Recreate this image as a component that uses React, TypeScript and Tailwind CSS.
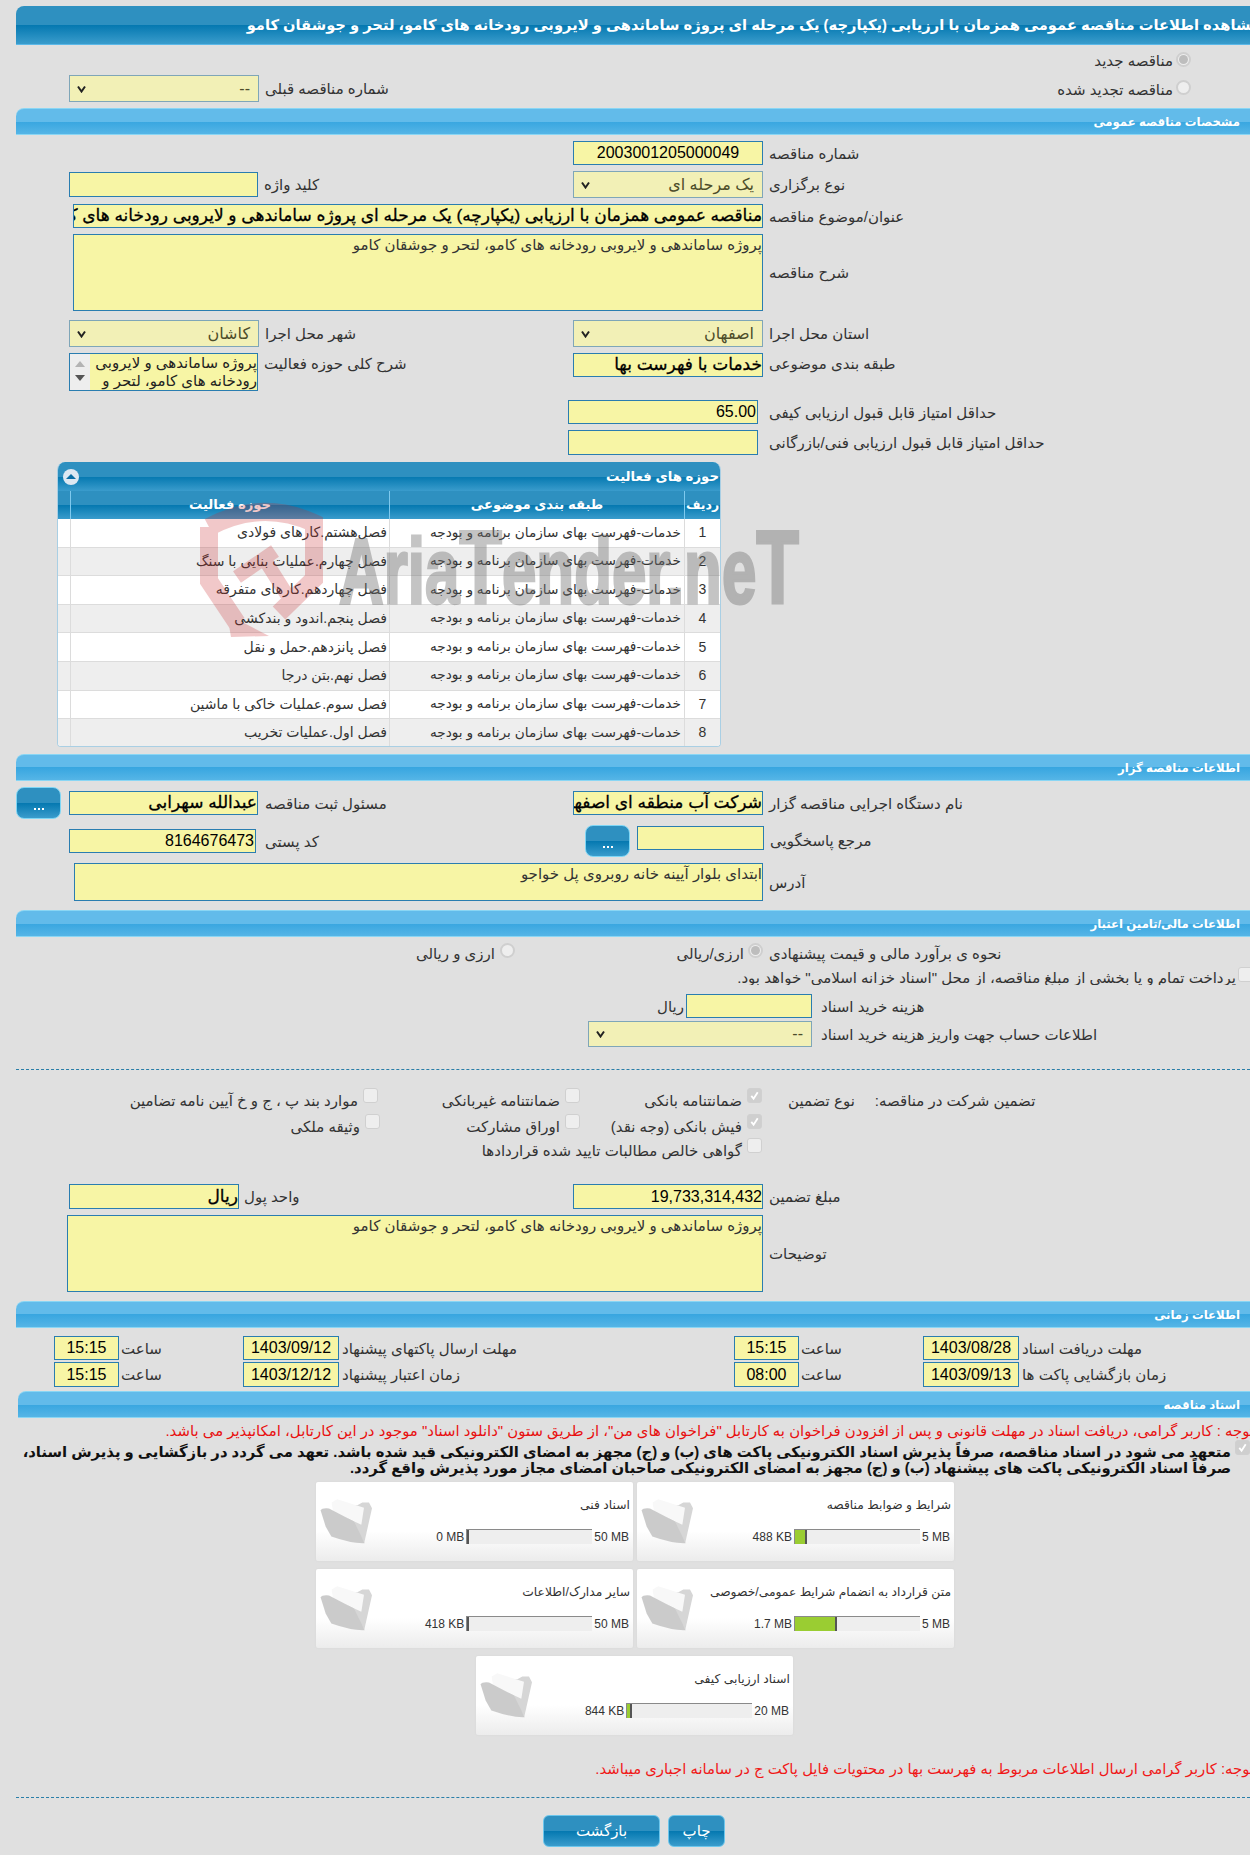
import type { ReactNode } from 'react';

const activities = [
  'فصل‌هشتم.کارهای فولادی',
  'فصل چهارم.عملیات بنایی با سنگ',
  'فصل چهاردهم.کارهای متفرقه',
  'فصل پنجم.اندود و بندکشی',
  'فصل پانزدهم.حمل و نقل',
  'فصل نهم.بتن درجا',
  'فصل سوم.عملیات خاکی با ماشین',
  'فصل اول.عملیات تخریب',
];

const desc = 'پروژه ساماندهی و لایروبی رودخانه های کامو، لتحر و جوشقان کامو';

function Bar({ title, className = '' }: { title: string; className?: string }) {
  return (
    <div
      dir="rtl"
      className={`flex h-[27px] items-center rounded-tr-none rounded-tl-[8px] border-t border-b border-[#8ad6f4] bg-[linear-gradient(180deg,#62bbea_0%,#62bbea_50%,#38a6e0_50%,#55b5e6_100%)] pr-[10px] text-[11.7px] font-bold text-white ${className}`}
    >
      {title}
    </div>
  );
}

function Label({ children, className = '' }: { children: ReactNode; className?: string }) {
  return (
    <span dir="rtl" className={`whitespace-nowrap text-[15px] leading-none text-[#333] ${className}`}>
      {children}
    </span>
  );
}

function Inp({ value = '', className = '' }: { value?: string; className?: string }) {
  return (
    <input
      readOnly
      dir="rtl"
      value={value}
      className={`block shrink-0 border border-[#2a7db0] bg-[#f7f5a5] px-0 text-black outline-none ${className}`}
    />
  );
}

function Sel({ value, className = '' }: { value: string; className?: string }) {
  return (
    <div
      className={`flex shrink-0 items-center justify-between border border-[#7fa6b8] bg-[#f2f0b6] pl-[6px] pr-[8px] text-[16px] text-[#4d4d2a] ${className}`}
    >
      <svg viewBox="0 0 10 8" className="h-[8px] w-[11px]" fill="none" stroke="#222" strokeWidth="2">
        <path d="M1.5 1.5L5 6.5L8.5 1.5" />
      </svg>
      <span dir="rtl">{value}</span>
    </div>
  );
}

function Area({ value, className = '' }: { value: string; className?: string }) {
  return (
    <textarea
      readOnly
      dir="rtl"
      value={value}
      className={`block shrink-0 resize-none overflow-hidden border border-[#2a7db0] bg-[#f7f5a5] px-0 text-[15px] leading-[20px] text-[#333] outline-none ${className}`}
    />
  );
}

function Radio({ on = false }: { on?: boolean }) {
  return (
    <span className="flex h-[15px] w-[15px] shrink-0 items-center justify-center rounded-full border-2 border-[#cfcfcf] bg-[#eeeeee]">
      {on && <span className="h-[9px] w-[9px] rounded-full bg-[#bdbdbd]" />}
    </span>
  );
}

function Check({ on = false }: { on?: boolean }) {
  return (
    <span
      className={`flex h-[15px] w-[15px] shrink-0 items-center justify-center rounded-[3px] border border-[#d0d0d0] ${on ? 'bg-[#cfcfcf]' : 'bg-[#eeeeee]'}`}
    >
      {on && (
        <svg viewBox="0 0 12 12" className="h-[11px] w-[11px]" fill="none" stroke="#fff" strokeWidth="2">
          <path d="M2.5 6.5L5 9.5L9.5 2.5" />
        </svg>
      )}
    </span>
  );
}

function DotsButton({ className = '' }: { className?: string }) {
  return (
    <div
      className={`flex h-[32px] w-[45px] shrink-0 items-end justify-center rounded-[8px] border border-[#7ed6f5] bg-[linear-gradient(180deg,#2e90c0_0%,#2e90c0_50%,#0478b0_50%,#3a9ccc_100%)] pb-[8px] ${className}`}
    >
      <span className="flex gap-[2px]">
        <span className="h-[2px] w-[2px] bg-white" />
        <span className="h-[2px] w-[2px] bg-white" />
        <span className="h-[2px] w-[2px] bg-white" />
      </span>
    </div>
  );
}

function Folder() {
  return (
    <svg viewBox="30 55 165 140" className="mt-[16px] ml-[3px] h-[47px] w-[55px] shrink-0">
      <path d="M70 72L145 76L160 68L180 68L189 85L166 188L120 120Z" fill="#d6d6d6" />
      <path d="M68 68L85 58L165 84L157 135L72 95Z" fill="#f8f8f8" />
      <path d="M35 92Q38 84 60 86L135 125L167 190Q130 192 67 170L50 140Z" fill="#cbcbcb" />
    </svg>
  );
}

function Card({ title, used, max, pct }: { title: string; used: string; max: string; pct: number }) {
  return (
    <div className="flex h-[79px] w-[317px] shrink-0 rounded-[2px] bg-[linear-gradient(180deg,#ffffff_0%,#ffffff_62%,#ececec_100%)] shadow-[0_0_2px_#d4d4d4]">
      <Folder />
      <div className="min-w-0 flex-1 pr-[3px]">
        <div dir="rtl" className="mt-[15px] h-[16px] whitespace-nowrap text-[12.3px] leading-[16px] text-[#333]">
          {title}
        </div>
        <div className="mt-[16px] flex items-center justify-end gap-[2px] pr-[1px] text-[12px] leading-none text-[#333]">
          <span>{used}</span>
          <div className="flex h-[15px] w-[126px] shrink-0 border-t border-l border-[#8a8a8a] bg-[#eeeeee]">
            <div className="h-full border-r-2 border-[#555] bg-[#9acd32]" style={{ width: `${pct}%` }} />
          </div>
          <span>{max}</span>
        </div>
      </div>
    </div>
  );
}

function GuaranteeCell({ label, on, className = '' }: { label: string; on?: boolean; className?: string }) {
  return (
    <div className={`flex shrink-0 justify-end gap-[5px] ${className}`}>
      <Label className="pt-[5px]">{label}</Label>
      <Check on={on} />
    </div>
  );
}

function Watermark() {
  return (
    <svg className="pointer-events-none absolute top-[495px] left-[195px] h-[150px] w-[610px]" viewBox="0 0 610 150" fill="none">
      <g opacity="0.25">
        <path d="M14 32Q66 4 119 28V84L84 118M14 32V86L42 128" stroke="#c8292b" strokeWidth="18" />
        <path d="M32 119L74 141L36 142Z" fill="#c8292b" />
        <path d="M42 82L80 56M68 62L92 100" stroke="#c8292b" strokeWidth="14" />
      </g>
      <text
        x="144"
        y="108"
        textLength="460"
        lengthAdjust="spacingAndGlyphs"
        fontFamily="'Liberation Sans', sans-serif"
        fontWeight="700"
        fontSize="92"
        fill="#6e6e6e"
        stroke="#6e6e6e"
        strokeWidth="3"
        opacity="0.4"
      >
        Aria<tspan fontSize="104">T</tspan>ender.ne<tspan fontSize="104">T</tspan>
      </text>
    </svg>
  );
}

export default function App() {
  return (
    <div className="relative h-[1855px] w-[1250px] overflow-hidden bg-[#e0e0e0] font-['Liberation_Sans','DejaVu_Sans',sans-serif]">
      <div dir="rtl" className="mt-0 ml-[16px] flex h-[39px] translate-y-[6px] items-center overflow-hidden rounded-tl-[8px] border-b border-[#5bb8e8] bg-[linear-gradient(180deg,#2e90c0_0%,#2e90c0_50%,#0478b0_50%,#3a9ccc_100%)] pt-[1px] text-[14.7px] font-bold whitespace-nowrap text-white">
        <span className="-mr-[10px]">
          مشاهده اطلاعات مناقصه عمومی همزمان با ارزیابی (یکپارچه) یک مرحله ای پروژه ساماندهی و لایروبی رودخانه های کامو، لتحر و جوشقان کامو
        </span>
      </div>

      <div className="mt-[13px] flex h-[20px] justify-end pr-[59px]">
        <Label className="pt-[1px] pr-[3px]">مناقصه جدید</Label>
        <Radio on />
      </div>
      <div className="mt-[3px] flex h-[27px]">
        <div className="flex w-[573px] shrink-0 items-center gap-[6px] pl-[69px]">
          <Sel value="--" className="h-[27px] w-[190px]" />
          <Label>شماره مناقصه قبلی</Label>
        </div>
        <div className="flex flex-1 justify-end pt-[5px] pr-[59px]">
          <Label className="pt-[2px] pr-[3px]">مناقصه تجدید شده</Label>
          <Radio />
        </div>
      </div>

      <Bar title="مشخصات مناقصه عمومی" className="mt-[6px] ml-[16px]" />

      <div className="mt-[6px] flex h-[24px] items-center gap-[6px] pl-[573px]">
        <Inp value="2003001205000049" className="h-[24px] w-[190px] text-center text-[16px]" />
        <Label>شماره مناقصه</Label>
      </div>
      <div className="mt-[6px] flex h-[27px] items-center">
        <div className="flex w-[573px] shrink-0 items-center gap-[6px] pl-[69px]">
          <Inp className="h-[25px] w-[189px]" />
          <Label>کلید واژه</Label>
        </div>
        <div className="flex items-center gap-[6px]">
          <Sel value="یک مرحله ای" className="h-[27px] w-[190px]" />
          <Label>نوع برگزاری</Label>
        </div>
      </div>
      <div className="mt-[6px] flex h-[24px] items-center gap-[6px] pl-[73px]">
        <Inp
          value="مناقصه عمومی همزمان با ارزیابی (یکپارچه) یک مرحله ای پروژه ساماندهی و لایروبی رودخانه های کامو، لتحر و جوشقان کامو"
          className="h-[24px] w-[690px] text-[17px] [-webkit-text-stroke:0.3px_#000]"
        />
        <Label>عنوان/موضوع مناقصه</Label>
      </div>
      <div className="mt-[6px] flex h-[77px] items-center gap-[6px] pl-[73px]">
        <Area value={desc} className="h-[77px] w-[690px]" />
        <Label>شرح مناقصه</Label>
      </div>
      <div className="mt-[9px] flex h-[27px] items-center">
        <div className="flex w-[573px] shrink-0 items-center gap-[6px] pl-[69px]">
          <Sel value="کاشان" className="h-[27px] w-[190px]" />
          <Label>شهر محل اجرا</Label>
        </div>
        <div className="flex items-center gap-[6px]">
          <Sel value="اصفهان" className="h-[27px] w-[190px]" />
          <Label>استان محل اجرا</Label>
        </div>
      </div>
      <div className="mt-[6px] flex h-[38px]">
        <div className="flex w-[573px] shrink-0 gap-[6px] pl-[69px]">
          <div className="flex h-[38px] w-[189px] shrink-0 border border-[#2a7db0] bg-[#f7f5a5]">
            <div className="flex w-[20px] shrink-0 flex-col items-center gap-[8px] bg-[#eeeeee] pt-[7px]">
              <span className="h-0 w-0 border-x-[5px] border-b-[6px] border-x-transparent border-b-[#b4b4b4]" />
              <span className="h-0 w-0 border-x-[5px] border-t-[6px] border-x-transparent border-t-[#555]" />
            </div>
            <div dir="rtl" className="flex-1 overflow-hidden text-[15px] leading-[18px] text-[#222]">
              پروژه ساماندهی و لایروبی رودخانه های کامو، لتحر و
            </div>
          </div>
          <Label className="pt-[3px]">شرح کلی حوزه فعالیت</Label>
        </div>
        <div className="flex gap-[6px]">
          <Inp value="خدمات با فهرست بها" className="h-[24px] w-[190px] text-[17px] [-webkit-text-stroke:0.3px_#000]" />
          <Label className="pt-[3px]">طبقه بندی موضوعی</Label>
        </div>
      </div>
      <div className="mt-[9px] flex h-[24px] items-center gap-[11px] pl-[568px]">
        <Inp value="65.00" className="h-[24px] w-[190px] pr-[1px] text-[16px]" />
        <Label>حداقل امتیاز قابل قبول ارزیابی کیفی</Label>
      </div>
      <div className="mt-[6px] flex h-[25px] items-center gap-[11px] pl-[568px]">
        <Inp className="h-[25px] w-[190px]" />
        <Label>حداقل امتیاز قابل قبول ارزیابی فنی/بازرگانی</Label>
      </div>

      <div className="mt-[7px] ml-[57px] h-[285px] w-[664px] overflow-hidden rounded-t-[8px] rounded-b-[4px] border-x border-b border-[#a9cfe4] bg-white">
        <div className="flex h-[29px] items-center justify-between bg-[linear-gradient(180deg,#2e90c0_0%,#2e90c0_50%,#0478b0_50%,#3a9ccc_100%)] pr-[1px] pl-[5px]">
          <span className="flex h-[16px] w-[16px] items-center justify-center rounded-full bg-[#dde8f2]">
            <span className="h-0 w-0 border-x-[5px] border-b-[5px] border-x-transparent border-b-[#0a6ea6]" />
          </span>
          <span dir="rtl" className="text-[13.3px] font-bold text-white">حوزه های فعالیت</span>
        </div>
        <div dir="rtl" className="flex h-[28px] items-center bg-[linear-gradient(180deg,#2e90c0_0%,#2e90c0_50%,#0478b0_50%,#3a9ccc_100%)] text-center text-[13.2px] font-bold text-white">
          <div className="flex h-full w-[36px] shrink-0 items-center justify-center border-l border-[#7ec9ee] text-[12.5px]">ردیف</div>
          <div className="flex h-full w-[295px] shrink-0 items-center justify-center border-l border-[#7ec9ee]">طبقه بندی موضوعی</div>
          <div className="flex h-full w-[319px] shrink-0 items-center justify-center border-l border-[#7ec9ee]">حوزه فعالیت</div>
        </div>
        {activities.map((a, i) => (
          <div
            key={a}
            dir="rtl"
            className={`flex h-[28.6px] items-center border-b border-[#dcdcdc] text-[#333] ${i % 2 === 1 ? 'bg-[#eeeeee]' : 'bg-white'}`}
          >
            <div className="flex h-full w-[36px] shrink-0 items-center justify-center border-l border-[#dcdcdc] text-[14px]">{i + 1}</div>
            <div className="flex h-full w-[295px] shrink-0 items-center border-l border-[#dcdcdc] pr-[3px] text-[13.7px] whitespace-nowrap">
              خدمات-فهرست بهای سازمان برنامه و بودجه
            </div>
            <div className="flex h-full w-[319px] shrink-0 items-center border-l border-[#dcdcdc] pr-[2px] text-[14px] whitespace-nowrap">{a}</div>
          </div>
        ))}
      </div>

      <Bar title="اطلاعات مناقصه گزار" className="mt-[7px] ml-[16px]" />

      <div className="mt-[6px] flex h-[32px] items-center pl-[16px]">
        <div className="flex w-[557px] shrink-0 items-center">
          <DotsButton className="mr-[8px]" />
          <Inp value="عبدالله سهرابی" className="h-[24px] w-[189px] text-[17px] [-webkit-text-stroke:0.3px_#000]" />
          <Label className="ml-[7px]">مسئول ثبت مناقصه</Label>
        </div>
        <Inp value="شرکت آب منطقه ای اصفهان" className="h-[24px] w-[190px] text-[17px] [-webkit-text-stroke:0.3px_#000]" />
        <Label className="ml-[6px]">نام دستگاه اجرایی مناقصه گزار</Label>
      </div>
      <div className="mt-[6px] flex h-[32px]">
        <div className="flex w-[585px] shrink-0 items-center gap-[9px] pl-[69px]">
          <Inp value="8164676473" className="h-[24px] w-[187px] pr-[1px] text-[16px]" />
          <Label>کد پستی</Label>
        </div>
        <DotsButton className="mt-0 mr-[7px]" />
        <Inp className="mt-[1px] h-[24px] w-[127px]" />
        <Label className="mt-[8px] ml-[6px]">مرجع پاسخگویی</Label>
      </div>
      <div className="mt-[6px] flex h-[38px] items-center gap-[6px] pl-[74px]">
        <Area value="ابتدای بلوار آیینه خانه روبروی پل خواجو" className="h-[38px] w-[689px]" />
        <Label>آدرس</Label>
      </div>

      <Bar title="اطلاعات مالی/تامین اعتبار" className="mt-[9px] ml-[16px]" />

      <div className="mt-[6px] flex h-[19px]">
        <div className="flex w-[515px] shrink-0 justify-end gap-[5px]">
          <Label className="pt-[3px]">ارزی و ریالی</Label>
          <Radio />
        </div>
        <div className="flex w-[248px] shrink-0 justify-end gap-[4px]">
          <Label className="pt-[3px]">ارزی/ریالی</Label>
          <Radio on />
        </div>
        <Label className="ml-[6px] pt-[3px]">نحوه ی برآورد مالی و قیمت پیشنهادی</Label>
      </div>
      <div className="mt-[5px] flex h-[18px] justify-end gap-[2px] overflow-hidden">
        <Label className="pt-[3px]">
          پرداخت تمام و یا بخشی از مبلغ مناقصه، از محل "اسناد خزانه اسلامی" خواهد بود.
        </Label>
        <span className="-mr-[3px]">
          <Check />
        </span>
      </div>
      <div className="mt-[9px] flex h-[24px] items-center">
        <div className="flex w-[686px] shrink-0 justify-end pr-[2px]">
          <Label>ریال</Label>
        </div>
        <Inp className="h-[24px] w-[126px]" />
        <Label className="ml-[9px]">هزینه خرید اسناد</Label>
      </div>
      <div className="mt-[3px] flex h-[26px] items-center pl-[588px]">
        <Sel value="--" className="h-[26px] w-[224px]" />
        <Label className="ml-[9px]">اطلاعات حساب جهت واریز هزینه خرید اسناد</Label>
      </div>

      <div className="mt-[22px] ml-[16px] border-t border-dashed border-[#2a7ea8]" />

      <div className="mt-[18px] flex h-[24px]">
        <GuaranteeCell label="موارد بند پ ، ج و خ آیین نامه تضامین" className="w-[378px]" />
        <GuaranteeCell label="ضمانتنامه غیربانکی" className="w-[202px]" />
        <GuaranteeCell label="ضمانتنامه بانکی" on className="w-[182px]" />
        <Label className="ml-[26px] pt-[5px]">نوع تضمین</Label>
        <Label className="ml-[20px] pt-[5px]">تضمین شرکت در مناقصه:</Label>
      </div>
      <div className="mt-[2px] flex h-[24px]">
        <GuaranteeCell label="وثیقه ملکی" className="w-[380px]" />
        <GuaranteeCell label="اوراق مشارکت" className="w-[200px]" />
        <GuaranteeCell label="فیش بانکی (وجه نقد)" on className="w-[182px]" />
      </div>
      <div className="flex h-[24px]">
        <GuaranteeCell label="گواهی خالص مطالبات تایید شده قراردادها" className="w-[762px]" />
      </div>

      <div className="mt-[22px] flex h-[25px] items-center">
        <div className="flex w-[573px] shrink-0 items-center gap-[5px] pl-[69px]">
          <Inp value="ریال" className="h-[25px] w-[170px] text-[17px] [-webkit-text-stroke:0.3px_#000]" />
          <Label>واحد پول</Label>
        </div>
        <Inp value="19,733,314,432" className="h-[25px] w-[190px] text-[16px]" />
        <Label className="ml-[6px]">مبلغ تضمین</Label>
      </div>
      <div className="mt-[6px] flex h-[77px] items-center gap-[6px] pl-[67px]">
        <Area value={desc} className="h-[77px] w-[696px]" />
        <Label>توضیحات</Label>
      </div>

      <Bar title="اطلاعات زمانی" className="mt-[9px] ml-[16px]" />

      <div className="mt-[8px] flex h-[24px] items-center pl-[54px]">
        <Inp value="15:15" className="h-[24px] w-[65px] text-center text-[16px]" />
        <Label className="ml-[2px] w-[122px] text-left">ساعت</Label>
        <Inp value="1403/09/12" className="h-[24px] w-[96px] text-center text-[16px]" />
        <Label className="ml-[3px] w-[392px] text-left">مهلت ارسال پاکتهای پیشنهاد</Label>
        <Inp value="15:15" className="h-[24px] w-[65px] text-center text-[16px]" />
        <Label className="ml-[2px] w-[122px] text-left">ساعت</Label>
        <Inp value="1403/08/28" className="h-[24px] w-[96px] text-center text-[16px]" />
        <Label className="ml-[3px]">مهلت دریافت اسناد</Label>
      </div>
      <div className="mt-[2px] flex h-[25px] items-center pl-[54px]">
        <Inp value="15:15" className="h-[25px] w-[65px] text-center text-[16px]" />
        <Label className="ml-[2px] w-[122px] text-left">ساعت</Label>
        <Inp value="1403/12/12" className="h-[25px] w-[96px] text-center text-[16px]" />
        <Label className="ml-[3px] w-[392px] text-left">زمان اعتبار پیشنهاد</Label>
        <Inp value="08:00" className="h-[25px] w-[65px] text-center text-[16px]" />
        <Label className="ml-[2px] w-[122px] text-left">ساعت</Label>
        <Inp value="1403/09/13" className="h-[25px] w-[96px] text-center text-[16px]" />
        <Label className="ml-[3px]">زمان بازگشایی پاکت ها</Label>
      </div>

      <Bar title="اسناد مناقصه" className="mt-[4px] ml-[18px]" />

      <div dir="rtl" className="mt-[5px] h-[17px] overflow-hidden text-[14.9px] leading-[17px] whitespace-nowrap text-[#e81010]">
        <span className="-mr-[4px] inline-block">
          توجه : کاربر گرامی، دریافت اسناد در مهلت قانونی و پس از افزودن فراخوان به کارتابل "فراخوان های من"، از طریق ستون "دانلود اسناد" موجود در این کارتابل، امکانپذیر می باشد.
        </span>
      </div>
      <div className="mt-[4px] flex h-[32px] justify-end">
        <div dir="rtl" className="text-[14.8px] leading-[16px] font-bold whitespace-nowrap text-[#111]">
          <div>متعهد می شود در اسناد مناقصه، صرفاً پذیرش اسناد الکترونیکی پاکت های (ب) و (ج) مجهز به امضای الکترونیکی قید شده باشد. تعهد می گردد در بازگشایی و پذیرش اسناد،</div>
          <div>صرفاً اسناد الکترونیکی پاکت های پیشنهاد (ب) و (ج) مجهز به امضای الکترونیکی صاحبان امضای مجاز مورد پذیرش واقع گردد.</div>
        </div>
        <span className="ml-[4px] mt-[-4px]">
          <Check on />
        </span>
      </div>

      <div className="mt-[6px] ml-[316px] flex gap-[4px]">
        <Card title="اسناد فنی" used="0 MB" max="50 MB" pct={0} />
        <Card title="شرایط و ضوابط مناقصه" used="488 KB" max="5 MB" pct={10} />
      </div>
      <div className="mt-[8px] ml-[316px] flex gap-[4px]">
        <Card title="سایر مدارک/اطلاعات" used="418 KB" max="50 MB" pct={1} />
        <Card title="متن قرارداد به انضمام شرایط عمومی/خصوصی" used="1.7 MB" max="5 MB" pct={34} />
      </div>
      <div className="mt-[8px] ml-[476px] flex">
        <Card title="اسناد ارزیابی کیفی" used="844 KB" max="20 MB" pct={4} />
      </div>

      <div dir="rtl" className="mt-[26px] h-[17px] overflow-hidden text-[14.85px] leading-[17px] whitespace-nowrap text-[#f01818]">
        <span className="-mr-[4px] inline-block">
          توجه: کاربر گرامی ارسال اطلاعات مربوط به فهرست بها در محتویات فایل پاکت ج در سامانه اجباری میباشد.
        </span>
      </div>

      <div className="mt-[19px] ml-[16px] border-t border-dashed border-[#2a7ea8]" />

      <div className="mt-[17px] ml-[543px] flex gap-[8px]">
        <div dir="rtl" className="flex h-[32px] w-[117px] items-center justify-center rounded-[6px] border border-[#6cc6ec] bg-[linear-gradient(180deg,#2e90c0_0%,#2e90c0_50%,#0478b0_50%,#3a9ccc_100%)] text-[15px] text-white">
          بازگشت
        </div>
        <div dir="rtl" className="flex h-[32px] w-[57px] items-center justify-center rounded-[6px] border border-[#6cc6ec] bg-[linear-gradient(180deg,#2e90c0_0%,#2e90c0_50%,#0478b0_50%,#3a9ccc_100%)] text-[15px] text-white">
          چاپ
        </div>
      </div>

      <Watermark />
    </div>
  );
}
